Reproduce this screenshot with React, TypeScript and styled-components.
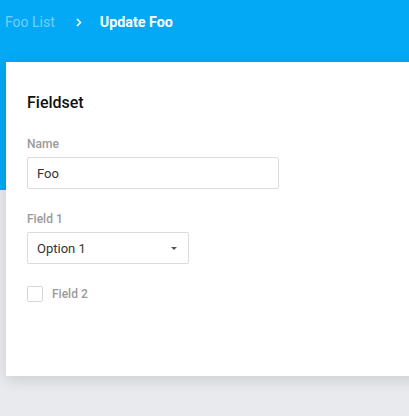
import React from 'react';
import styled, {createGlobalStyle} from 'styled-components';

const GlobalStyle = createGlobalStyle`
  html, body {
    margin: 0;
    padding: 0;
    background: #e9eaee;
    font-family: Roboto, "Liberation Sans", Arial, sans-serif;
  }
`;

const Page = styled.div`
  min-height: 416px;
  overflow: hidden;
  background: linear-gradient(to bottom, #03a9f4 0, #03a9f4 190px, #e9eaee 190px);
`;

const Breadcrumb = styled.nav`
  display: flex;
  align-items: center;
  height: 62px;
  padding: 0 0 18px 5px;
  box-sizing: border-box;
  font-size: 14px;
`;

const Crumb = styled.span<{ current?: boolean }>`
  color: ${p => (p.current ? '#ffffff' : 'rgba(255, 255, 255, 0.45)')};
  font-weight: ${p => (p.current ? 700 : 400)};
  font-size: ${p => (p.current ? '14.3px' : '14px')};
`;

const Separator = styled.span`
  display: flex;
  align-items: center;
  margin: 0 18px 0 21px;
  color: #ffffff;
`;

const Card = styled.section`
  margin-left: 6px;
  width: 440px;
  height: 314px;
  padding: 31px 21px 0 21px;
  box-sizing: border-box;
  background: #ffffff;
  box-shadow: 0 4px 14px rgba(0, 0, 0, 0.12);
`;

const Title = styled.h2`
  margin: 0 0 23px;
  font-size: 16px;
  line-height: 20px;
  font-weight: 500;
  color: #111111;
`;

const Field = styled.div`
  display: flex;
  flex-direction: column;
  margin-bottom: 22px;
`;

const Label = styled.label`
  font-size: 12px;
  line-height: 16px;
  font-weight: 500;
  color: #9a9a9a;
  margin-bottom: 5px;
`;

const TextInput = styled.div<{ width: number }>`
  display: flex;
  align-items: center;
  justify-content: space-between;
  width: ${p => p.width}px;
  height: 32px;
  padding: 0 8px 0 9px;
  box-sizing: border-box;
  border: 1px solid #dcdcdc;
  border-radius: 2px;
  font-size: 13px;
  color: #333333;
`;

const Caret = styled.span`
  width: 0;
  height: 0;
  margin-right: 3px;
  border-left: 3.5px solid transparent;
  border-right: 3.5px solid transparent;
  border-top: 3.5px solid #555555;
`;

const CheckRow = styled.label`
  display: flex;
  align-items: center;
  gap: 9px;
  font-size: 12px;
  font-weight: 500;
  color: #9a9a9a;
`;

const Box = styled.span`
  width: 16px;
  height: 16px;
  box-sizing: border-box;
  border: 1px solid #d6d6d6;
  border-radius: 2px;
`;

export default function App() {
    return (
        <Page>
            <GlobalStyle/>
            <Breadcrumb>
                <Crumb>Foo List</Crumb>
                <Separator>
                    <svg width="6" height="9" viewBox="0 0 6 9">
                        <path d="M1 1l3.5 3.5L1 8" fill="none" stroke="#fff" strokeWidth="1.6"/>
                    </svg>
                </Separator>
                <Crumb current>Update Foo</Crumb>
            </Breadcrumb>
            <Card>
                <Title>Fieldset</Title>
                <Field>
                    <Label>Name</Label>
                    <TextInput width={252}>Foo</TextInput>
                </Field>
                <Field>
                    <Label>Field 1</Label>
                    <TextInput width={162}>
                        Option 1
                        <Caret/>
                    </TextInput>
                </Field>
                <CheckRow>
                    <Box/>
                    Field 2
                </CheckRow>
            </Card>
        </Page>
    );
}
